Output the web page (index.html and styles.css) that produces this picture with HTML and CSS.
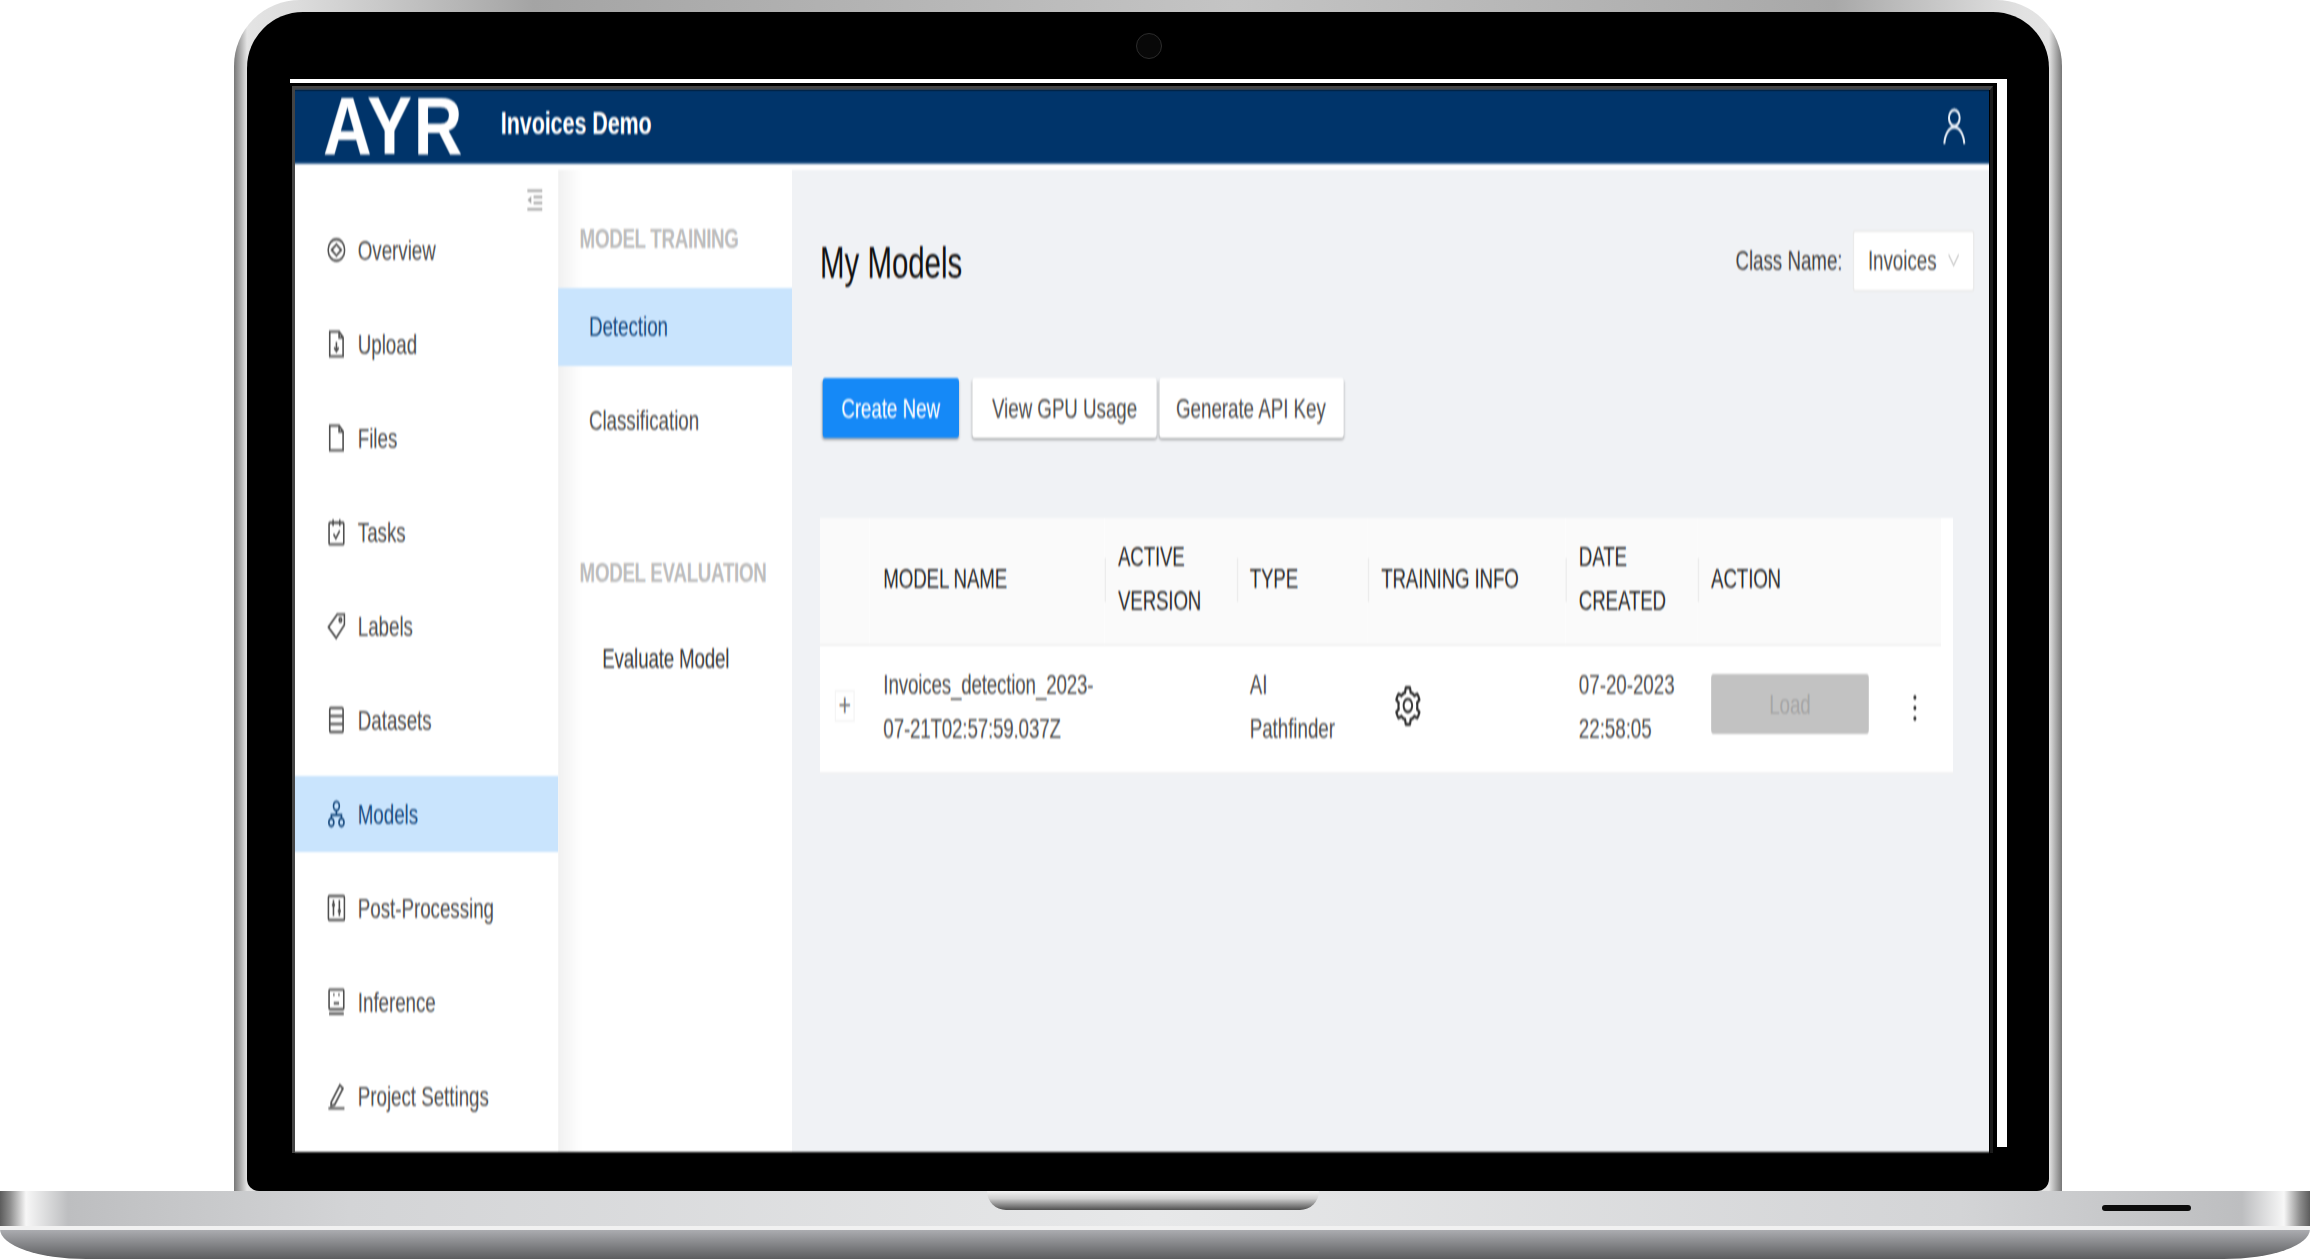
FILE: index.html
```html
<!DOCTYPE html>
<html lang="en">
<head>
  <meta charset="UTF-8" />
  <title>AYR Invoices Demo</title>
  <link rel="stylesheet" href="styles.css">
</head>
<body>
  <div class="laptop">
    <div class="lid">
      <div class="bezel">
        <span class="camera"></span>
        <div class="screen">
          <div class="app">

            <header class="topbar">
              <span class="logo">AYR</span>
              <span class="project-name">Invoices Demo</span>
              <svg class="user-icon" viewBox="0 0 18 18"><circle cx="9" cy="5" r="4"/><path d="M1.5 18C2 12.8 5.3 9.6 9 9.6s7 3.2 7.5 8.4"/></svg>
            </header>

            <div class="workspace">
              <nav class="sidebar">
                <svg class="collapse-icon" viewBox="0 0 14 12"><path d="M1 1h12M6 4.4h7M6 7.6h7M1 11h12"/><path class="solid" d="M4.2 4 1 6l3.2 2z"/></svg>
                <a class="nav-item"><svg class="nav-icon" viewBox="0 0 14 14"><ellipse cx="7" cy="7" rx="6.2" ry="5.4"/><path d="M3.4 7 7 4.2 10.6 7 7 9.8z"/></svg>Overview</a>
                <a class="nav-item"><svg class="nav-icon" viewBox="0 0 14 14"><path d="M2 .8h7l3 3v9.4H2zM9 .8v3h3"/><path d="M7 6v4.4M5.3 8.8 7 10.6l1.7-1.8"/></svg>Upload</a>
                <a class="nav-item"><svg class="nav-icon" viewBox="0 0 14 14"><path d="M2 .8h7l3 3v9.4H2zM9 .8v3h3"/></svg>Files</a>
                <a class="nav-item"><svg class="nav-icon" viewBox="0 0 14 14"><rect x="1.5" y="2.4" width="11" height="10.8" rx=".6"/><path d="M4.5.8V4M9.5.8V4M4.8 8l1.8 2.2 2.9-3.9"/></svg>Tasks</a>
                <a class="nav-item"><svg class="nav-icon" viewBox="0 0 14 14"><path d="M1 7.6 7.6 1.2H13v5.2L6.8 13z"/><circle cx="10" cy="4" r=".9"/></svg>Labels</a>
                <a class="nav-item"><svg class="nav-icon" viewBox="0 0 14 14"><rect x="2" y="1" width="10" height="12" rx=".8"/><path d="M2 5h10M2 9h10"/></svg>Datasets</a>
                <a class="nav-item active"><svg class="nav-icon" viewBox="0 0 14 14"><circle cx="7" cy="3" r="2.2"/><circle cx="3.2" cy="11.2" r="1.9"/><circle cx="10.8" cy="11.2" r="1.9"/><path d="M7 5.2v2.3M3.2 9.3V7.5h7.6v1.8"/></svg>Models</a>
                <a class="nav-item"><svg class="nav-icon" viewBox="0 0 14 14"><rect x="1" y="1" width="12" height="12" rx=".8"/><path d="M4.8 3v8M9.2 3v8M3.6 5.5h2.4M8 8.5h2.4"/></svg>Post-Processing</a>
                <a class="nav-item"><svg class="nav-icon" viewBox="0 0 14 14"><rect x="1.5" y=".8" width="11" height="9.8" rx=".6"/><path d="M4.6 3.4h1M8.4 3.4h1M5 7.6h4M1.5 12.9h11"/></svg>Inference</a>
                <a class="nav-item"><svg class="nav-icon" viewBox="0 0 14 14"><path d="M3 10.2 9.6 1.6l2.3 1.6-6.3 8.2-2.6.4zM1 13.2h12"/></svg>Project Settings</a>
              </nav>

              <aside class="subnav">
                <h4 class="subnav-title">MODEL TRAINING</h4>
                <a class="subnav-item active">Detection</a>
                <a class="subnav-item">Classification</a>
                <h4 class="subnav-title second">MODEL EVALUATION</h4>
                <a class="subnav-item inset">Evaluate Model</a>
              </aside>

              <main class="main">
                <div class="main-head">
                  <h1 class="page-title">My Models</h1>
                  <label class="class-label">Class Name:</label>
                  <div class="select">
                    <span>Invoices</span>
                    <svg class="chevron" viewBox="0 0 10 8"><path d="M.8 1 5 7l4.2-6"/></svg>
                  </div>
                </div>

                <div class="toolbar">
                  <button class="btn primary">Create New</button>
                  <button class="btn wide">View GPU Usage</button>
                  <button class="btn wide">Generate API Key</button>
                </div>

                <div class="table-wrap">
                  <table class="models">
                    <thead>
                      <tr>
                        <th class="col-expand"></th>
                        <th class="col-name">MODEL NAME</th>
                        <th class="col-version sep">ACTIVE<br>VERSION</th>
                        <th class="col-type sep">TYPE</th>
                        <th class="col-training sep">TRAINING INFO</th>
                        <th class="col-date sep">DATE<br>CREATED</th>
                        <th class="col-action sep">ACTION</th>
                      </tr>
                    </thead>
                    <tbody>
                      <tr>
                        <td class="expand-cell"><span class="expand">+</span></td>
                        <td class="name-cell">Invoices_detection_2023-<br>07-21T02:57:59.037Z</td>
                        <td></td>
                        <td>AI<br>Pathfinder</td>
                        <td><svg class="gear" viewBox="64 64 896 896"><path d="M924.8 625.7l-65.5-56c3.1-19 4.7-38.4 4.7-57.8s-1.6-38.8-4.7-57.8l65.5-56a32.03 32.03 0 0 0 9.3-35.2l-.9-2.6a443.74 443.74 0 0 0-79.7-137.9l-1.8-2.1a32.12 32.12 0 0 0-35.1-9.5l-81.3 28.9c-30-24.6-63.5-44-99.7-57.6l-15.7-85a32.05 32.05 0 0 0-25.8-25.7l-2.7-.5c-52.1-9.4-106.9-9.4-159 0l-2.7.5a32.05 32.05 0 0 0-25.8 25.7l-15.8 85.4a351.86 351.86 0 0 0-99 57.4l-81.9-29.1a32 32 0 0 0-35.1 9.5l-1.8 2.1a446.02 446.02 0 0 0-79.7 137.9l-.9 2.6c-4.5 12.5-.8 26.5 9.3 35.2l66.3 56.6c-3.1 18.8-4.6 38-4.6 57.1 0 19.2 1.5 38.4 4.6 57.1L99 625.5a32.03 32.03 0 0 0-9.3 35.2l.9 2.6c18.1 50.4 44.9 96.9 79.7 137.9l1.8 2.1a32.12 32.12 0 0 0 35.1 9.5l81.9-29.1c29.8 24.5 63.1 43.9 99 57.4l15.8 85.4a32.05 32.05 0 0 0 25.8 25.7l2.7.5a449.4 449.4 0 0 0 159 0l2.7-.5a32.05 32.05 0 0 0 25.8-25.7l15.7-85a350 350 0 0 0 99.7-57.6l81.3 28.9a32 32 0 0 0 35.1-9.5l1.8-2.1c34.8-41.1 61.6-87.5 79.7-137.9l.9-2.6c4.5-12.3.8-26.3-9.3-35zM788.3 465.9c2.5 15.1 3.8 30.6 3.8 46.1s-1.3 31-3.8 46.1l-6.6 40.1 74.7 63.9a370.03 370.03 0 0 1-42.6 73.6L721 702.8l-31.4 25.8c-23.9 19.6-50.5 35-79.3 45.8l-38.1 14.3-17.9 97a377.5 377.5 0 0 1-85 0l-17.9-97.2-37.8-14.5c-28.5-10.8-55-26.2-78.7-45.7l-31.4-25.9-93.4 33.2c-17-22.9-31.2-47.6-42.6-73.6l75.5-64.5-6.5-40c-2.4-14.9-3.7-30.3-3.7-45.5 0-15.3 1.2-30.6 3.7-45.5l6.5-40-75.5-64.5c11.3-26.1 25.6-50.7 42.6-73.6l93.4 33.2 31.4-25.9c23.7-19.5 50.2-34.9 78.7-45.7l37.9-14.3 17.9-97.2c28.1-3.2 56.8-3.2 85 0l17.9 97 38.1 14.3c28.7 10.8 55.4 26.2 79.3 45.8l31.4 25.8 92.8-32.9c17 22.9 31.2 47.6 42.6 73.6L781.8 426l6.5 39.9zM512 326c-97.2 0-176 78.8-176 176s78.8 176 176 176 176-78.8 176-176-78.8-176-176-176zm79.2 255.2A111.6 111.6 0 0 1 512 614c-29.9 0-58-11.7-79.2-32.8A111.6 111.6 0 0 1 400 502c0-29.9 11.7-58 32.8-79.2C454 401.6 482.1 390 512 390c29.9 0 58 11.6 79.2 32.8A111.6 111.6 0 0 1 624 502c0 29.9-11.7 58-32.8 79.2z"/></svg></td>
                        <td>07-20-2023<br>22:58:05</td>
                        <td class="action-td">
                          <div class="action-cell">
                            <button class="btn load" disabled>Load</button>
                            <svg class="more" viewBox="0 0 4 18"><circle cx="2" cy="2" r="1.5"/><circle cx="2" cy="9" r="1.5"/><circle cx="2" cy="16" r="1.5"/></svg>
                          </div>
                        </td>
                      </tr>
                    </tbody>
                  </table>
                </div>
              </main>
            </div>

          </div>
        </div>
      </div>
    </div>
    <div class="base">
      <span class="notch"></span>
      <span class="speaker"></span>
      <div class="base-top"></div>
      <div class="base-bottom"></div>
    </div>
  </div>
</body>
</html>
```

FILE: styles.css
```css
:root {
  --navy: #00346a;
  --active-bg: #c9e4fd;
  --active-text: #1a4c80;
  --text: #505050;
  --text-dark: #2b2b2b;
  --blue: #1589f7;
  --page-bg: #f0f2f5;
}

* { box-sizing: border-box; }

html, body {
  margin: 0;
  height: 1259px;
  background: #fff;
  overflow: hidden;
}

/* laptop frame */
.laptop {
  width: 2310px;
}

.lid {
  width: 1828px;
  height: 1191px;
  margin-left: 234px;
  padding: 12px 13px 0;
  border-radius: 66px 66px 0 0;
  background: linear-gradient(90deg, #777 0, #e4e4e4 13px, #ddd 60px, #a4a4a4 300px, #c4c4c4 1000px, #a8a8a8 1600px, #e2e2e2 1790px, #e4e4e4 1815px, #777 100%);
}

.bezel {
  position: relative;
  height: 100%;
  padding: 74px 58px 0 45px;
  border-radius: 56px 56px 12px 12px;
  background: #000;
}

/* the white slivers around the screen shot */
.bezel::before {
  content: "";
  position: absolute;
  left: 43px;
  right: 42px;
  top: 67px;
  height: 4px;
  background: #fff;
}

.bezel::after {
  content: "";
  position: absolute;
  top: 67px;
  right: 42px;
  width: 10px;
  height: 1068px;
  background: #fff;
}

.camera {
  position: absolute;
  left: 889px;
  top: 21px;
  width: 26px;
  height: 26px;
  border-radius: 50%;
  background: #080808;
  border: 1px solid #2c2c2c;
}

.screen {
  width: 1701px;
  height: 1067px;
  border-top: 4px solid #444;
  border-left: 3px solid #444;
  border-right: 3px solid #1c1c1c;
}

.base {
  position: relative;
  width: 2310px;
  height: 68px;
}

.base-top {
  height: 35px;
  background: linear-gradient(90deg, #5c5c5c 0, #8d8d8d 10px, #f7f7f7 26px, #bdbec0 68px, #d3d4d6 350px, #e7e8e9 1155px, #d3d4d6 1960px, #bdbec0 2242px, #f7f7f7 2284px, #8d8d8d 2300px, #5c5c5c 100%);
}

.base-bottom {
  height: 33px;
  border-top: 4px solid #f1f1f1;
  border-radius: 0 0 86px 86px / 0 0 30px 30px;
  background: linear-gradient(#abacb0, #5c5d5f);
}

.notch {
  position: absolute;
  left: 987px;
  top: 0;
  width: 332px;
  height: 19px;
  border-radius: 0 0 19px 19px;
  background: linear-gradient(#f2f2f2, #cfcfcf 40%, #4f4f4f);
}

.speaker {
  position: absolute;
  left: 2102px;
  top: 14px;
  width: 89px;
  height: 6px;
  border-radius: 3px;
  background: #0c0c0c;
}

/* the app is a stretched screen shot, so it is laid out small and scaled */
.app {
  width: 1268px;
  height: 531px;
  display: flex;
  flex-direction: column;
  background: #fff;
  font-family: "Liberation Sans", Arial, sans-serif;
  font-size: 14px;
  line-height: 22px;
  color: var(--text);
  transform: scale(1.336, 2);
  transform-origin: 0 0;
  filter: blur(0.5px);
}

.topbar {
  flex: none;
  display: flex;
  align-items: center;
  height: 37px;
  padding: 0 17.5px 0 21px;
  background: var(--navy);
  border-bottom: 1px solid #2b5a8c;
  color: #fff;
}

.logo {
  width: 133px;
  font-size: 41px;
  line-height: 37px;
  font-weight: 700;
  letter-spacing: 1px;
  transform: scaleX(1.23);
  transform-origin: 0 50%;
}

.project-name {
  flex: 1;
  margin-bottom: 1.5px;
  font-size: 16px;
  font-weight: 700;
}

.user-icon {
  width: 18px;
  height: 18px;
  fill: none;
  stroke: #e6edf5;
  stroke-width: 1.5;
}

.workspace {
  flex: 1;
  display: flex;
  min-height: 0;
}

/* left menu */
.sidebar {
  flex: none;
  width: 197px;
  padding-top: 11.5px;
  background: #fff;
}

.collapse-icon {
  display: block;
  width: 13px;
  height: 12px;
  margin-left: 173px;
  fill: none;
  stroke: #a8a8a8;
  stroke-width: 1.4;
}

.collapse-icon .solid {
  fill: #a8a8a8;
  stroke: none;
}

.nav-item {
  display: flex;
  align-items: center;
  height: 38.5px;
  margin-bottom: 8.5px;
  padding-left: 24px;
}

.nav-item.active {
  background: var(--active-bg);
  color: var(--active-text);
}

.nav-icon {
  flex: none;
  width: 14px;
  height: 14px;
  margin-right: 9px;
  fill: none;
  stroke: currentColor;
  stroke-width: 1.2;
}

/* second menu */
.subnav {
  flex: none;
  width: 175px;
  margin-top: 3px;
  padding-top: 23.25px;
  background: linear-gradient(90deg, #f1f1f1, #fff 18px);
}

.subnav-title {
  margin: 0 0 13.25px;
  padding-left: 16px;
  font-size: 14px;
  font-weight: 700;
  letter-spacing: -0.2px;
  color: #bdbdbd;
}

.subnav-title.second {
  margin-top: 44.5px;
  white-space: nowrap;
}

.subnav-item {
  display: block;
  height: 39.5px;
  margin-bottom: 7.75px;
  padding-left: 23px;
  line-height: 39.5px;
}

.subnav-item.active {
  background: var(--active-bg);
  color: var(--active-text);
  line-height: 38.5px;
}

.subnav-item.inset {
  padding-left: 33px;
  letter-spacing: -0.1px;
  color: #3d3d3d;
}

/* content */
.main {
  flex: 1;
  margin-top: 3px;
  padding: 30.25px 11.2px 0 21px;
  background: var(--page-bg);
}

.main-head {
  display: flex;
  align-items: center;
  height: 31px;
}

.page-title {
  flex: 1;
  margin: 3px 0 0;
  font-size: 22px;
  font-weight: 400;
  color: #111;
}

.class-label {
  margin: 0 8px 2px 0;
  color: #444;
}

.select {
  display: flex;
  align-items: center;
  justify-content: space-between;
  width: 90.5px;
  height: 31px;
  padding: 0 10px 2px 10px;
  background: #fff;
  border: 1px solid #ebebeb;
  border-radius: 2px;
}

.chevron {
  width: 9px;
  height: 8px;
  fill: none;
  stroke: #c4c4c4;
  stroke-width: 0.9;
}

.toolbar {
  display: flex;
  margin-top: 43px;
  padding-left: 1.5px;
}

.btn {
  height: 30px;
  padding: 0 0 1.5px;
  border: 0;
  border-radius: 2px;
  font: inherit;
  color: var(--text);
  background: #fff;
  box-shadow: 0 1px 1.5px rgba(0, 0, 0, 0.32);
}

.btn.primary {
  width: 102.5px;
  margin-right: 10px;
  background: var(--blue);
  color: #fff;
}

.btn.wide {
  width: 138px;
  margin-right: 1.5px;
}

.btn.load {
  width: 118px;
  height: 30.5px;
  padding-bottom: 1px;
  background: #c2c2c2;
  color: #a6a6a6;
  box-shadow: none;
}

.table-wrap {
  width: 847.9px;
  margin-top: 39.5px;
  background: #fff;
  border-bottom: 1px solid #f2f2f2;
}

.models {
  width: 839.4px;
  border-collapse: collapse;
  table-layout: fixed;
}

.models th {
  position: relative;
  height: 63.75px;
  padding: 0 4px 2px 10px;
  background: #fafafa;
  border-bottom: 1px solid #f0f0f0;
  font-weight: 400;
  letter-spacing: -0.1px;
  text-align: left;
  color: var(--text-dark);
}

.models th.sep::before {
  content: "";
  position: absolute;
  left: 0;
  top: 20px;
  width: 1px;
  height: 22px;
  background: #ececec;
}

.models td {
  height: 63.5px;
  padding: 0 4px 3.5px 10px;
  vertical-align: middle;
}

.col-expand { width: 37.4px; }
.col-name { width: 175.6px; }
.col-version { width: 98.6px; }
.col-type { width: 98.4px; }
.col-training { width: 148px; }
.col-date { width: 99px; }

.models .name-cell {
  letter-spacing: -0.1px;
}

.models .expand-cell {
  padding: 0 0 4px 11px;
}

.expand {
  display: block;
  width: 15px;
  height: 16px;
  border: 1px solid #f5f5f5;
  font-size: 16px;
  line-height: 14px;
  text-align: center;
  color: #777;
}

.gear {
  display: block;
  width: 20px;
  height: 20px;
  margin: 0 0 0 10px;
  fill: #333;
}

.models .action-td {
  padding-bottom: 5px;
}

.action-cell {
  display: flex;
  align-items: center;
}

.more {
  width: 3px;
  height: 14px;
  margin: 3px 0 0 33px;
  fill: #333;
}
```
